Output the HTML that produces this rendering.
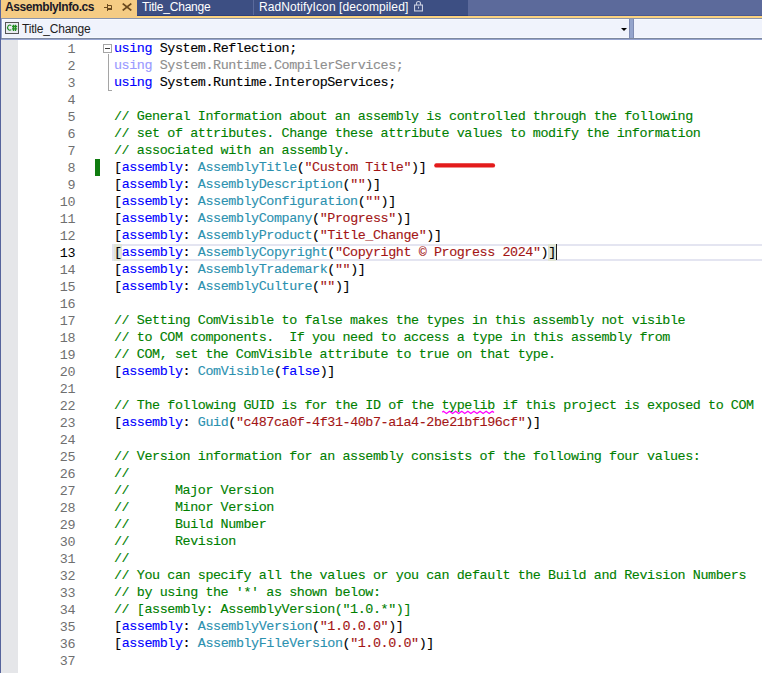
<!DOCTYPE html>
<html><head><meta charset="utf-8">
<style>
html,body{margin:0;padding:0;}
body{width:762px;height:673px;overflow:hidden;position:relative;background:#ffffff;font-family:"Liberation Sans",sans-serif;}
.abs{position:absolute;}
#tabbar{left:0;top:0;width:762px;height:16px;background:#5c6a9b;}
#tabbar .bot{left:0;top:15px;width:762px;height:1px;background:#4c5a90;}
#gold{left:0;top:16px;width:762px;height:2px;background:#fcd37f;}
#tab1{left:1px;top:0;width:136px;height:18px;background:#f5cc84;}
#tab2{left:137px;top:0;width:116px;height:15px;background:#3d4f83;}
#tabdiv{left:253px;top:0;width:1px;height:15px;background:#5a6a9c;}
#tab3{left:254px;top:0;width:214px;height:15px;background:#3d4f83;}
.tt{position:absolute;white-space:pre;font-size:12px;line-height:15px;}
#ddbar{left:0;top:18px;width:762px;height:20px;background:#94a4cc;}
#ddtop{left:0;top:18px;width:762px;height:1px;background:#8a96ae;}
.dd{position:absolute;top:19px;height:17px;background:#f0f3fc;border-top:1px solid #fafbfe;border-bottom:1px solid #f6f8fd;}
#dd1{left:2px;width:626px;border-left:1px solid #fafbfe;}
#dd2{left:634px;width:128px;}
#ddline{left:0;top:38px;width:762px;height:1px;background:#7d889f;}
#ddline2{left:0;top:39px;width:762px;height:1px;background:#95a3cf;}
.dsep{position:absolute;top:19px;width:1px;height:19px;background:#7e8bb2;}
#lborder{left:0;top:0;width:1px;height:673px;background:#56649c;}
#gutter{left:1px;top:40px;width:17px;height:633px;background:#e5e6e9;}
.ln{position:absolute;left:20px;width:55px;text-align:right;height:17px;line-height:17px;font-family:"Liberation Mono",monospace;font-size:13.4px;letter-spacing:-0.42px;color:#6f6f6f;}
.ln.cur{color:#000000;}
.cl{position:absolute;left:114px;height:17px;line-height:17px;white-space:pre;font-family:"Liberation Mono",monospace;font-size:13.4px;letter-spacing:-0.42px;color:#000;-webkit-text-stroke:0.12px currentColor;}
.k{color:#0000ff;}
.t{color:#2b91af;}
.s{color:#a31515;}
.c{color:#008000;}
.p{color:#000000;}
.fk{color:#9a9aff;}
.fp{color:#8e8e8e;}
</style></head><body>
<div id="tabbar" class="abs"><div class="abs bot"></div></div>
<div id="gold" class="abs"></div>
<div id="tab1" class="abs"></div>
<div id="tab2" class="abs"></div>
<div id="tabdiv" class="abs"></div>
<div id="tab3" class="abs"></div>
<div class="abs" style="left:137px;top:15px;width:331px;height:1px;background:#2e407b"></div>
<div class="tt" style="left:5px;top:0;font-weight:bold;color:#1a1a28;letter-spacing:-0.42px">AssemblyInfo.cs</div>
<div class="tt" style="left:142px;top:0;color:#ffffff;letter-spacing:-0.2px">Title_Change</div>
<div class="tt" style="left:259px;top:0;color:#ffffff;letter-spacing:0.1px">RadNotifyIcon [decompiled]</div>
<div id="ddbar" class="abs"></div>
<div id="ddtop" class="abs"></div>
<div id="dd1" class="dd"></div>
<div id="dd2" class="dd"></div>
<div class="dsep" style="left:629px"></div>
<div class="dsep" style="left:633px"></div>
<div id="ddline" class="abs"></div>
<div id="ddline2" class="abs"></div>
<svg class="abs" style="left:621px;top:28px" width="6" height="3" viewBox="0 0 6 3"><path d="M0 0H6L3 3Z" fill="#000"/></svg>
<div class="abs" style="left:5px;top:22px;width:12px;height:10px;border:1px solid #555;background:#e9ebf2"></div>
<svg class="abs" style="left:5px;top:22px" width="14" height="12" viewBox="0 0 14 12">
<path d="M6.3 3.6A2.3 2.5 0 1 0 6.3 7.6" fill="none" stroke="#1e8c1e" stroke-width="1.1"/>
<path d="M8.5 2.8V9M10.5 2.8V9M7 4.5H12.2M7 6.8H12.2" fill="none" stroke="#1e8c1e" stroke-width="1.3"/>
</svg>
<svg class="abs" style="left:104px;top:3px" width="9" height="9" viewBox="0 0 9 9">
<path d="M0 4.5H3.5M3.5 1V8M3.5 2.5H7.5V6" fill="none" stroke="#6b4a1e" stroke-width="1"/>
<path d="M3.5 6H8" stroke="#6b4a1e" stroke-width="2" fill="none"/>
</svg>
<svg class="abs" style="left:122px;top:3px" width="10" height="8" viewBox="0 0 10 8">
<path d="M0.7 0.6L9.3 7.4M9.3 0.6L0.7 7.4" fill="none" stroke="#6b4a1e" stroke-width="1.75"/>
</svg>
<svg class="abs" style="left:414px;top:0px" width="10" height="12" viewBox="0 0 10 12">
<path d="M2.5 5V3.5A2 2 0 0 1 6.5 3.5V5" fill="none" stroke="#c9cee0" stroke-width="1.1"/>
<rect x="0.55" y="5.05" width="7.9" height="5.9" fill="none" stroke="#c9cee0" stroke-width="1.1"/>
<path d="M4.5 6.6V8.6" stroke="#c9cee0" stroke-width="1.1"/>
</svg>
<div class="tt" style="left:22px;top:22px;color:#1e1e1e;letter-spacing:-0.2px;line-height:15px">Title_Change</div>
<div id="lborder" class="abs"></div>
<div id="gutter" class="abs"></div>

<div class="abs" style="left:95px;top:159px;width:5px;height:17px;background:#107c10"></div>
<div class="abs" style="left:112px;top:244px;width:700px;height:13px;border:2px solid #e4e5f1;"></div>
<div class="abs" style="left:114px;top:244px;width:8px;height:17px;background:#e1e5d6"></div>
<div class="abs" style="left:548px;top:244px;width:8px;height:17px;background:#e1e5d6"></div>
<div class="abs" style="left:556px;top:244px;width:1px;height:16px;background:#1e1e1e"></div>
<svg class="abs" style="left:430px;top:160px" width="70" height="10" viewBox="0 0 70 10"><path d="M6.4 5.4H62.9" stroke="#e31b1b" stroke-width="4.4" stroke-linecap="round"/></svg>
<div class="abs" style="left:103px;top:44px;width:7px;height:7px;border:1px solid #a5a5a5;background:#fff"></div>
<div class="abs" style="left:105px;top:48px;width:5px;height:1px;background:#3c3c3c"></div>
<div class="abs" style="left:108px;top:54px;width:1px;height:37px;background:#a5a5a5"></div>
<div class="abs" style="left:108px;top:90px;width:4px;height:1px;background:#a5a5a5"></div>
<div class="ln" style="top:41px">1</div><div class="ln" style="top:58px">2</div><div class="ln" style="top:75px">3</div><div class="ln" style="top:92px">4</div><div class="ln" style="top:109px">5</div><div class="ln" style="top:126px">6</div><div class="ln" style="top:143px">7</div><div class="ln" style="top:160px">8</div><div class="ln" style="top:177px">9</div><div class="ln" style="top:194px">10</div><div class="ln" style="top:211px">11</div><div class="ln" style="top:228px">12</div><div class="ln cur" style="top:245px">13</div><div class="ln" style="top:262px">14</div><div class="ln" style="top:279px">15</div><div class="ln" style="top:296px">16</div><div class="ln" style="top:313px">17</div><div class="ln" style="top:330px">18</div><div class="ln" style="top:347px">19</div><div class="ln" style="top:364px">20</div><div class="ln" style="top:381px">21</div><div class="ln" style="top:398px">22</div><div class="ln" style="top:415px">23</div><div class="ln" style="top:432px">24</div><div class="ln" style="top:449px">25</div><div class="ln" style="top:466px">26</div><div class="ln" style="top:483px">27</div><div class="ln" style="top:500px">28</div><div class="ln" style="top:517px">29</div><div class="ln" style="top:534px">30</div><div class="ln" style="top:551px">31</div><div class="ln" style="top:568px">32</div><div class="ln" style="top:585px">33</div><div class="ln" style="top:602px">34</div><div class="ln" style="top:619px">35</div><div class="ln" style="top:636px">36</div><div class="ln" style="top:653px">37</div>
<div class="cl" style="top:40px"><span class="k">using</span><span class="p">&#32;System.Reflection;</span></div><div class="cl" style="top:57px"><span class="fk">using</span><span class="fp">&#32;System.Runtime.CompilerServices;</span></div><div class="cl" style="top:74px"><span class="k">using</span><span class="p">&#32;System.Runtime.InteropServices;</span></div><div class="cl" style="top:108px"><span class="c">//&#32;General&#32;Information&#32;about&#32;an&#32;assembly&#32;is&#32;controlled&#32;through&#32;the&#32;following</span></div><div class="cl" style="top:125px"><span class="c">//&#32;set&#32;of&#32;attributes.&#32;Change&#32;these&#32;attribute&#32;values&#32;to&#32;modify&#32;the&#32;information</span></div><div class="cl" style="top:142px"><span class="c">//&#32;associated&#32;with&#32;an&#32;assembly.</span></div><div class="cl" style="top:159px"><span class="p">[</span><span class="k">assembly</span><span class="p">:&#32;</span><span class="t">AssemblyTitle</span><span class="p">(</span><span class="s">"Custom&#32;Title"</span><span class="p">)]</span></div><div class="cl" style="top:176px"><span class="p">[</span><span class="k">assembly</span><span class="p">:&#32;</span><span class="t">AssemblyDescription</span><span class="p">(</span><span class="s">""</span><span class="p">)]</span></div><div class="cl" style="top:193px"><span class="p">[</span><span class="k">assembly</span><span class="p">:&#32;</span><span class="t">AssemblyConfiguration</span><span class="p">(</span><span class="s">""</span><span class="p">)]</span></div><div class="cl" style="top:210px"><span class="p">[</span><span class="k">assembly</span><span class="p">:&#32;</span><span class="t">AssemblyCompany</span><span class="p">(</span><span class="s">"Progress"</span><span class="p">)]</span></div><div class="cl" style="top:227px"><span class="p">[</span><span class="k">assembly</span><span class="p">:&#32;</span><span class="t">AssemblyProduct</span><span class="p">(</span><span class="s">"Title_Change"</span><span class="p">)]</span></div><div class="cl" style="top:244px"><span class="p">[</span><span class="k">assembly</span><span class="p">:&#32;</span><span class="t">AssemblyCopyright</span><span class="p">(</span><span class="s">"Copyright&#32;©&#32;Progress&#32;2024"</span><span class="p">)]</span></div><div class="cl" style="top:261px"><span class="p">[</span><span class="k">assembly</span><span class="p">:&#32;</span><span class="t">AssemblyTrademark</span><span class="p">(</span><span class="s">""</span><span class="p">)]</span></div><div class="cl" style="top:278px"><span class="p">[</span><span class="k">assembly</span><span class="p">:&#32;</span><span class="t">AssemblyCulture</span><span class="p">(</span><span class="s">""</span><span class="p">)]</span></div><div class="cl" style="top:312px"><span class="c">//&#32;Setting&#32;ComVisible&#32;to&#32;false&#32;makes&#32;the&#32;types&#32;in&#32;this&#32;assembly&#32;not&#32;visible</span></div><div class="cl" style="top:329px"><span class="c">//&#32;to&#32;COM&#32;components.&#32;&#32;If&#32;you&#32;need&#32;to&#32;access&#32;a&#32;type&#32;in&#32;this&#32;assembly&#32;from</span></div><div class="cl" style="top:346px"><span class="c">//&#32;COM,&#32;set&#32;the&#32;ComVisible&#32;attribute&#32;to&#32;true&#32;on&#32;that&#32;type.</span></div><div class="cl" style="top:363px"><span class="p">[</span><span class="k">assembly</span><span class="p">:&#32;</span><span class="t">ComVisible</span><span class="p">(</span><span class="k">false</span><span class="p">)]</span></div><div class="cl" style="top:397px"><span class="c">//&#32;The&#32;following&#32;GUID&#32;is&#32;for&#32;the&#32;ID&#32;of&#32;the&#32;typelib&#32;if&#32;this&#32;project&#32;is&#32;exposed&#32;to&#32;COM</span></div><div class="cl" style="top:414px"><span class="p">[</span><span class="k">assembly</span><span class="p">:&#32;</span><span class="t">Guid</span><span class="p">(</span><span class="s">"c487ca0f-4f31-40b7-a1a4-2be21bf196cf"</span><span class="p">)]</span></div><div class="cl" style="top:448px"><span class="c">//&#32;Version&#32;information&#32;for&#32;an&#32;assembly&#32;consists&#32;of&#32;the&#32;following&#32;four&#32;values:</span></div><div class="cl" style="top:465px"><span class="c">//</span></div><div class="cl" style="top:482px"><span class="c">//&#32;&#32;&#32;&#32;&#32;&#32;Major&#32;Version</span></div><div class="cl" style="top:499px"><span class="c">//&#32;&#32;&#32;&#32;&#32;&#32;Minor&#32;Version</span></div><div class="cl" style="top:516px"><span class="c">//&#32;&#32;&#32;&#32;&#32;&#32;Build&#32;Number</span></div><div class="cl" style="top:533px"><span class="c">//&#32;&#32;&#32;&#32;&#32;&#32;Revision</span></div><div class="cl" style="top:550px"><span class="c">//</span></div><div class="cl" style="top:567px"><span class="c">//&#32;You&#32;can&#32;specify&#32;all&#32;the&#32;values&#32;or&#32;you&#32;can&#32;default&#32;the&#32;Build&#32;and&#32;Revision&#32;Numbers</span></div><div class="cl" style="top:584px"><span class="c">//&#32;by&#32;using&#32;the&#32;'*'&#32;as&#32;shown&#32;below:</span></div><div class="cl" style="top:601px"><span class="c">//&#32;[assembly:&#32;AssemblyVersion("1.0.*")]</span></div><div class="cl" style="top:618px"><span class="p">[</span><span class="k">assembly</span><span class="p">:&#32;</span><span class="t">AssemblyVersion</span><span class="p">(</span><span class="s">"1.0.0.0"</span><span class="p">)]</span></div><div class="cl" style="top:635px"><span class="p">[</span><span class="k">assembly</span><span class="p">:&#32;</span><span class="t">AssemblyFileVersion</span><span class="p">(</span><span class="s">"1.0.0.0"</span><span class="p">)]</span></div>
<svg class="abs" style="left:440px;top:408px" width="60" height="8" viewBox="0 0 60 8"><path d="M2.30 4.30 L3.45 3.30 L6.50 5.50 L9.55 3.30 L12.60 5.50 L15.65 3.30 L18.70 5.50 L21.75 3.30 L24.80 5.50 L27.85 3.30 L30.90 5.50 L33.95 3.30 L37.00 5.50 L40.05 3.30 L43.10 5.50 L46.15 3.30 L49.20 5.50 L52.25 3.30 L54.00 4.50" fill="none" stroke="#ff00ff" stroke-width="1.4" stroke-linejoin="miter"/></svg>

</body></html>
